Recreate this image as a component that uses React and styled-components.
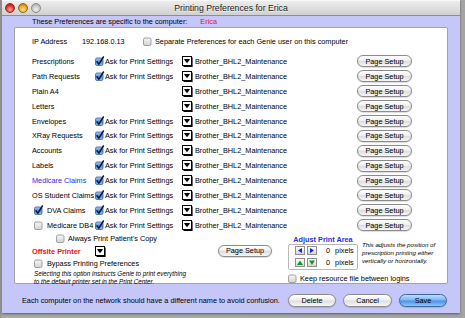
import React from 'react';
import styled, { createGlobalStyle } from 'styled-components';

const GlobalStyle = createGlobalStyle`
  html, body { margin: 0; padding: 0; }
  body {
    background: #9c9c9c;
    font-family: "Liberation Sans", Arial, sans-serif;
    font-size: 7.3px;
    color: #000;
  }
`;

const Desktop = styled.div`
  width: 465px;
  height: 318px;
  padding-left: 2px;
  box-sizing: border-box;
  background: linear-gradient(90deg, #8c8c8c 0, #a9a9a9 2px, #a4a4a4 100%);
  overflow: hidden;
`;

const Window = styled.div`
  width: 458px;
  height: 313px;
  background: #c4c7f7;
  display: flex;
  flex-direction: column;
  box-shadow: 0 1px 2px rgba(0, 0, 0, 0.45);
`;

const TitleBar = styled.div`
  height: 16px;
  flex: none;
  box-sizing: border-box;
  display: grid;
  grid-template-columns: 1fr auto 1fr;
  align-items: center;
  background: linear-gradient(#ededed, #d0d0d0);
  border-top: 1px solid #f9f9f9;
  border-bottom: 1px solid #8e8e8e;
`;

const Lights = styled.div`
  display: flex;
  gap: 3px;
  padding-left: 3px;
`;

const Light = styled.span`
  width: 10px;
  height: 10px;
  box-sizing: border-box;
  border-radius: 50%;
  border: 1px solid ${(p) => p.$edge};
  background: radial-gradient(circle at 50% 70%, ${(p) => p.$hi} 0, ${(p) => p.$c} 55%, ${(p) => p.$dark} 100%);
`;

const Title = styled.div`
  font-size: 8.7px;
  color: #1a1a1a;
  text-shadow: 0 1px 0 rgba(255, 255, 255, 0.6);
`;

const Header = styled.div`
  height: 11px;
  flex: none;
  display: flex;
  align-items: center;
  padding-left: 30px;
`;

const Red = styled.span`
  color: #e8141c;
  margin-left: ${(p) => p.$gap || 0}px;
  font-weight: ${(p) => (p.$bold ? 'bold' : 'normal')};
`;

const Panel = styled.div`
  flex: none;
  height: 257px;
  margin: 0 12px;
  box-sizing: border-box;
  background: #fff;
  border: 1px solid #a2a2a2;
  border-radius: 2px;
  padding: 6.5px 0 0 17px;
`;

const IpRow = styled.div`
  height: 14px;
  display: flex;
  align-items: center;
  margin-bottom: 5.5px;
`;

const Cell = styled.span`
  width: ${(p) => p.$w}px;
  flex: none;
`;

const PrefRow = styled.div`
  height: 14.9px;
  display: grid;
  grid-template-columns: 63px 10px 77px 13px 162px 55px;
  align-items: center;
  white-space: nowrap;
`;

const Label = styled.span`
  display: block;
  width: 62px;
  overflow: hidden;
  white-space: nowrap;
  color: ${(p) => p.$color || '#000'};
`;

const CheckLabel = styled.span`
  display: flex;
  align-items: center;
  gap: ${(p) => p.$gap ?? 3}px;
  padding-left: ${(p) => p.$indent || 0}px;
  white-space: nowrap;
`;

const PillButton = styled.button`
  width: ${(p) => p.$w || 55}px;
  height: ${(p) => p.$h || 12}px;
  padding: 0;
  box-sizing: border-box;
  border-radius: 7px;
  border: 1px solid ${(p) => (p.$primary ? '#3f68a8' : '#8c8c8c')};
  background: ${(p) =>
    p.$primary
      ? 'linear-gradient(#bcdcff, #7fb6f3 45%, #4d93e6 55%, #8cc6fb)'
      : 'linear-gradient(#ffffff, #efefef 45%, #dedede 55%, #f7f7f7)'};
  box-shadow: 0 0.5px 1px rgba(0, 0, 0, 0.25);
  font-family: inherit;
  font-size: 7.3px;
  color: #000;
  display: flex;
  align-items: center;
  justify-content: center;
`;

const Lower = styled.div`
  display: flex;
`;

const LeftCol = styled.div`
  width: 186px;
  flex: none;
  display: flex;
  flex-direction: column;
`;

const Line = styled.div`
  height: ${(p) => p.$h}px;
  display: flex;
  align-items: center;
`;

const Hint = styled.div`
  font-style: italic;
  font-size: 6.3px;
  line-height: 8px;
  padding-left: ${(p) => p.$indent || 0}px;
  white-space: nowrap;
`;

const ButtonCol = styled.div`
  padding-top: 12px;
`;

const RightCol = styled.div`
  margin-left: 16px;
  display: flex;
  flex-direction: column;
`;

const AdjustRow = styled.div`
  display: flex;
`;

const AdjustCol = styled.div`
  width: 70px;
  padding-top: 2px;
  display: flex;
  flex-direction: column;
`;

const AdjustTitle = styled.div`
  height: 9px;
  line-height: 9px;
  text-align: center;
  color: #2630e8;
  font-weight: bold;
  font-size: 7.3px;
`;

const AdjustBox = styled.div`
  height: 26px;
  box-sizing: border-box;
  border: 1px solid #b9b9b9;
  border-radius: 2px;
  padding: 0 0 0 6px;
  display: flex;
  flex-direction: column;
  justify-content: center;
`;

const NudgeRow = styled.div`
  height: 12.3px;
  display: flex;
  align-items: center;
  gap: 2px;
`;

const Nudge = styled.span`
  width: 10px;
  height: 9px;
  box-sizing: border-box;
  border: 1px solid #8f8f8f;
  background: linear-gradient(#fdfdfd, #d6d6d6);
  display: flex;
  align-items: center;
  justify-content: center;
`;

const Pixels = styled.span`
  margin-left: 7px;
  word-spacing: 3px;
`;

const Note = styled.div`
  margin-left: 4px;
  padding-top: 8.6px;
  font-style: italic;
  font-size: 6.2px;
  line-height: 8px;
  white-space: nowrap;
`;

const KeepLine = styled.div`
  height: 10px;
  margin-top: 3.5px;
  display: flex;
  align-items: center;
  gap: 3px;
`;

const BottomBar = styled.div`
  flex: 1;
  display: flex;
  align-items: center;
  padding: 4px 13px 0 20px;
`;

const Actions = styled.div`
  margin-left: auto;
  display: flex;
  gap: 7px;
`;

const Check = ({ on }) => (
  <svg width="9" height="9" viewBox="0 0 9 9" style={{ display: 'block', flex: 'none', overflow: 'visible' }}>
    <defs>
      <linearGradient id="cbOn" x1="0" y1="0" x2="0" y2="1">
        <stop offset="0" stopColor="#a9cdf7" />
        <stop offset="0.5" stopColor="#4f8fe0" />
        <stop offset="1" stopColor="#8dc1f5" />
      </linearGradient>
      <linearGradient id="cbOff" x1="0" y1="0" x2="0" y2="1">
        <stop offset="0" stopColor="#f6f6f6" />
        <stop offset="1" stopColor="#d4d4d4" />
      </linearGradient>
    </defs>
    <rect x="0.5" y="1" width="7.5" height="7.5" rx="1.5" fill={on ? 'url(#cbOn)' : 'url(#cbOff)'} stroke={on ? '#3a5f9c' : '#8b8b8b'} strokeWidth="0.8" />
    {on && <path d="M2 4.8 L3.9 7.2 L8.4 0" fill="none" stroke="#0c1830" strokeWidth="1.5" strokeLinecap="round" strokeLinejoin="round" />}
  </svg>
);

const Popup = () => (
  <svg width="11" height="11" viewBox="0 0 11 11" style={{ display: 'block' }}>
    <rect x="0.5" y="0.5" width="9" height="9" fill="#fff" stroke="#000" strokeWidth="1" />
    <path d="M10 1.5 V10.5 H1.5" fill="none" stroke="#000" strokeWidth="1.2" />
    <path d="M2.3 3 H7.7 V3.8 L5 7.2 L2.3 3.8 Z" fill="#000" />
  </svg>
);

const Arrow = ({ dir, color }) => {
  const pts = {
    left: '6,1 6,6 2,3.5',
    right: '2,1 2,6 6,3.5',
    up: '1,6 7,6 4,1.5',
    down: '1,1.5 7,1.5 4,6',
  }[dir];
  return (
    <svg width="8" height="7" viewBox="0 0 8 7" style={{ display: 'block' }}>
      <polygon points={pts} fill={color} />
    </svg>
  );
};

const PRINTER = 'Brother_BHL2_Maintenance';

const rows = [
  { label: 'Prescriptions', ask: true },
  { label: 'Path Requests', ask: true },
  { label: 'Plain A4' },
  { label: 'Letters' },
  { label: 'Envelopes', ask: true },
  { label: 'XRay Requests', ask: true },
  { label: 'Accounts', ask: true },
  { label: 'Labels', ask: true },
  { label: 'Medicare Claims', ask: true, color: '#2b2bf0' },
  { label: 'OS Student Claims', ask: true },
  { label: 'DVA Claims', ask: true, toggle: true, on: true },
  { label: 'Medicare DB4', ask: true, toggle: true, on: false },
];

const App = () => (
  <>
    <GlobalStyle />
    <Desktop>
      <Window>
        <TitleBar>
          <Lights>
            <Light $c="#e2302c" $hi="#ffb0a0" $dark="#9a1410" $edge="#8a2a26" />
            <Light $c="#f0a21a" $hi="#ffe6a0" $dark="#a8620a" $edge="#946418" />
            <Light $c="#c8c8c8" $hi="#f2f2f2" $dark="#9a9a9a" $edge="#8c8c8c" />
          </Lights>
          <Title>Printing Preferences for Erica</Title>
          <span />
        </TitleBar>

        <Header>
          These Preferences are specific to the computer:
          <Red $gap={13}>Erica</Red>
        </Header>

        <Panel>
          <IpRow>
            <Cell $w={50}>IP Address</Cell>
            <Cell $w={61}>192.168.0.13</Cell>
            <CheckLabel $gap={3}>
              <Check on={false} />
              Separate Preferences for each Genie user on this computer
            </CheckLabel>
          </IpRow>

          {rows.map((r) => (
            <PrefRow key={r.label}>
              {r.toggle ? (
                <CheckLabel $indent={2} $gap={4}>
                  <Check on={r.on} />
                  {r.label}
                </CheckLabel>
              ) : (
                <Label $color={r.color}>{r.label}</Label>
              )}
              <span>{r.ask && <Check on />}</span>
              <span>{r.ask && 'Ask for Print Settings'}</span>
              <Popup />
              <span>{PRINTER}</span>
              <PillButton>Page Setup</PillButton>
            </PrefRow>
          ))}

          <Lower>
            <LeftCol>
              <Line $h={12}>
                <CheckLabel $indent={24} $gap={3}>
                  <Check on={false} />
                  Always Print Patient's Copy
                </CheckLabel>
              </Line>
              <Line $h={13}>
                <Cell $w={63}>
                  <Red $bold>Offsite Printer</Red>
                </Cell>
                <Popup />
              </Line>
              <Line $h={12}>
                <CheckLabel $indent={2} $gap={4}>
                  <Check on={false} />
                  Bypass Printing Preferences
                </CheckLabel>
              </Line>
              <Hint $indent={2}>Selecting this option instructs Genie to print everything</Hint>
              <Hint $indent={2}>to the default printer set in the Print Center.</Hint>
            </LeftCol>

            <ButtonCol>
              <PillButton $w={54}>Page Setup</PillButton>
            </ButtonCol>

            <RightCol>
              <AdjustRow>
                <AdjustCol>
                  <AdjustTitle>Adjust Print Area</AdjustTitle>
                  <AdjustBox>
                    <NudgeRow>
                      <Nudge><Arrow dir="left" color="#1626c8" /></Nudge>
                      <Nudge><Arrow dir="right" color="#1626c8" /></Nudge>
                      <Pixels>0 pixels</Pixels>
                    </NudgeRow>
                    <NudgeRow>
                      <Nudge><Arrow dir="up" color="#139a1e" /></Nudge>
                      <Nudge><Arrow dir="down" color="#139a1e" /></Nudge>
                      <Pixels>0 pixels</Pixels>
                    </NudgeRow>
                  </AdjustBox>
                </AdjustCol>
                <Note>
                  This adjusts the position of
                  <br />
                  prescription printing either
                  <br />
                  vertically or horizontally.
                </Note>
              </AdjustRow>
              <KeepLine>
                <Check on={false} />
                Keep resource file between logins
              </KeepLine>
            </RightCol>
          </Lower>
        </Panel>

        <BottomBar>
          Each computer on the network should have a different name to avoid confusion.
          <Actions>
            <PillButton $w={48} $h={13}>Delete</PillButton>
            <PillButton $w={49} $h={13}>Cancel</PillButton>
            <PillButton $w={48} $h={13} $primary>Save</PillButton>
          </Actions>
        </BottomBar>
      </Window>
    </Desktop>
  </>
);

export default App;
